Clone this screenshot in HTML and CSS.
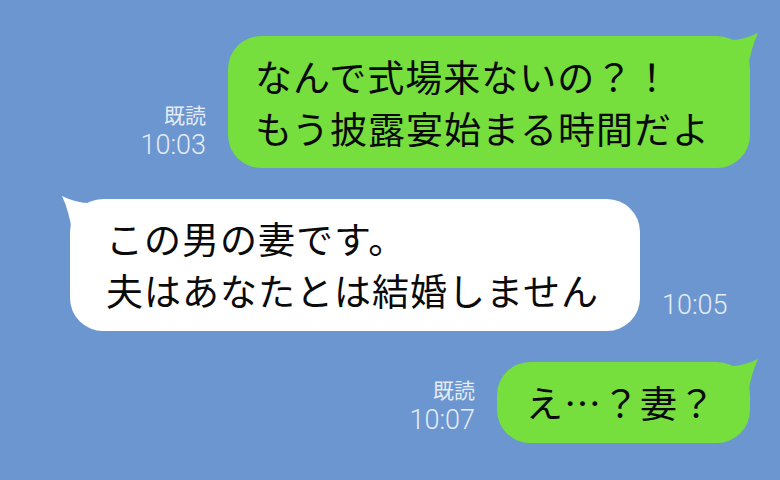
FILE: index.html
```html
<!DOCTYPE html>
<html lang="ja">
<head>
<meta charset="utf-8">
<link rel="stylesheet" href="styles.css">
</head>
<body>
<div class="chat">
  <div class="row row-me row-1">
    <div class="meta">
      <div class="read">既読</div>
      <div class="time">10:03</div>
    </div>
    <div class="bubble bubble-me b1">
      <svg class="tail tail-right" viewBox="0 0 40 40" width="40" height="40"><path d="M6 8 Q22 9 38 1 Q31 16 28 36 L6 36 Z"/></svg>
      <p>なんで式場来ないの？！<br>もう披露宴始まる時間だよ</p>
    </div>
  </div>
  <div class="row row-them row-2">
    <div class="bubble bubble-them b2">
      <svg class="tail tail-left" viewBox="0 0 40 40" width="40" height="40"><path d="M34 8 Q18 9 2 1 Q9 16 12 36 L34 36 Z"/></svg>
      <p>この男の妻です。<br>夫はあなたとは結婚しません</p>
    </div>
    <div class="meta meta-them">
      <div class="time">10:05</div>
    </div>
  </div>
  <div class="row row-me row-3">
    <div class="meta">
      <div class="read">既読</div>
      <div class="time">10:07</div>
    </div>
    <div class="bubble bubble-me b3">
      <svg class="tail tail-right" viewBox="0 0 40 40" width="40" height="40"><path d="M6 8 Q22 9 38 1 Q31 16 28 36 L6 36 Z"/></svg>
      <p>え…？妻？</p>
    </div>
  </div>
</div>
</body>
</html>
```
FILE: styles.css
```css
html, body {
  margin: 0;
  padding: 0;
}
body {
  width: 780px;
  height: 480px;
  overflow: hidden;
  background: #6c96cf;
  font-family: "Noto Sans CJK JP", "Noto Sans", sans-serif;
}
.chat {
  display: flex;
  flex-direction: column;
  gap: 31px;
  padding-top: 36px;
}
.row {
  display: flex;
  align-items: flex-end;
}
.row-me {
  justify-content: flex-end;
  padding-right: 30px;
  gap: 22px;
}
.row-them {
  justify-content: flex-start;
  padding-left: 70px;
  gap: 22px;
}
.bubble {
  position: relative;
  border-radius: 33px;
  box-sizing: border-box;
}
.bubble p {
  margin: 0;
  position: relative;
  font-size: 37px;
  line-height: 52px;
  color: #0a0a0a;
  letter-spacing: 1px;
}
.bubble-me {
  background: #76de3d;
}
.bubble-me .tail {
  fill: #76de3d;
}
.bubble-them {
  background: #ffffff;
}
.bubble-them .tail {
  fill: #ffffff;
}
.tail {
  position: absolute;
  top: -4px;
}
.tail-right {
  right: -10px;
}
.tail-left {
  left: -10px;
}
.b1 {
  width: 522px;
  height: 132px;
  padding: 14px 0 0 27px;
}
.b2 {
  width: 570px;
  height: 132px;
  padding: 13px 0 0 36px;
}
.b3 {
  width: 253px;
  height: 81px;
  padding: 14px 0 0 29px;
}
.meta {
  display: flex;
  flex-direction: column;
  align-items: flex-end;
  color: #e4ecf7;
  margin-bottom: 7px;
}
.meta-them {
  margin-bottom: 10px;
  align-items: flex-start;
}
.read {
  font-size: 21px;
  line-height: 30px;
}
.time {
  font-family: Roboto, "Liberation Sans", sans-serif;
  font-weight: 300;
  font-size: 27px;
  line-height: 32px;
}
```
